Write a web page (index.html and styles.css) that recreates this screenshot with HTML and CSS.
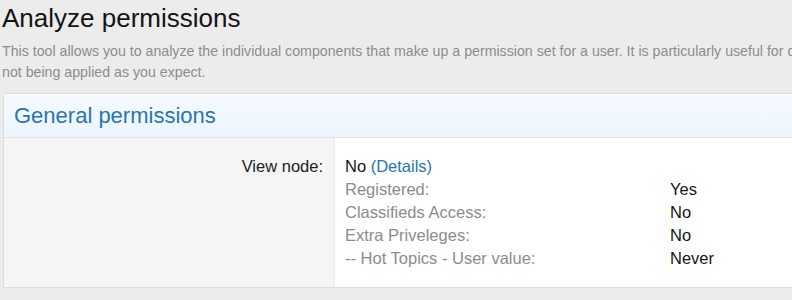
FILE: index.html
```html
<!DOCTYPE html>
<html>
<head>
  <meta charset="utf-8">
  <title>Analyze permissions</title>
  <link rel="stylesheet" href="styles.css">
</head>
<body>
  <h1 class="page-title">Analyze permissions</h1>
  <p class="page-desc">This tool allows you to analyze the individual components that make up a permission set for a user. It is particularly useful for determining why permissions are not being applied as you expect.</p>

  <div class="block">
    <h2 class="block-header">General permissions</h2>
    <dl class="form-row">
      <dt>View node:</dt>
      <dd>
        <div>No <a href="#">(Details)</a></div>
        <ul class="perm-list">
          <li><span class="perm-name">Registered:</span> <span class="perm-value">Yes</span></li>
          <li><span class="perm-name">Classifieds Access:</span> <span class="perm-value">No</span></li>
          <li><span class="perm-name">Extra Priveleges:</span> <span class="perm-value">No</span></li>
          <li><span class="perm-name">-- Hot Topics - User value:</span> <span class="perm-value">Never</span></li>
        </ul>
      </dd>
    </dl>
  </div>
</body>
</html>
```

FILE: styles.css
```css
body {
    margin: 0;
    padding: 3px 0 0 2px;
    width: 1020px;
    background: #ececec;
    font-family: "Liberation Sans", Arial, sans-serif;
    color: #141414;
}

.page-title {
    margin: 0;
    font-size: 26px;
    font-weight: normal;
    line-height: 30px;
}

.page-desc {
    margin: 8px 0 10px;
    width: 1010px;
    font-size: 14.2px;
    line-height: 21px;
    color: #8c8c8c;
}

.block {
    margin-left: 1px;
    border: 1px solid #dcdcdc;
    border-radius: 3px;
    background: #fff;
    box-shadow: 0 1px 1px rgba(0,0,0,0.06);
}

.block-header {
    margin: 0;
    padding: 10px 10px;
    font-size: 22px;
    font-weight: normal;
    line-height: 23px;
    color: #2577b1;
    background: linear-gradient(to bottom, #f5faff, #edf5fd);
    border-bottom: 1px solid #dfe3e7;
}

.form-row {
    display: flex;
    margin: 0;
}

.form-row dt {
    width: 319px;
    padding: 17px 11px 17px 0;
    text-align: right;
    background: #f5f5f5;
    border-right: 1px solid #ececec;
    font-size: 16.5px;
    line-height: 23px;
    color: #222;
}

.form-row dd {
    margin: 0;
    padding: 17px 10px 17px 10px;
    font-size: 16.5px;
    line-height: 23px;
    color: #141414;
}

.form-row a {
    color: #2577b1;
    text-decoration: none;
}

.perm-list {
    list-style: none;
    margin: 0;
    padding: 0;
}

.perm-list li {
    display: flex;
}

.perm-name {
    width: 325px;
    color: #8c8c8c;
}

.perm-value {
    color: #141414;
}
```
